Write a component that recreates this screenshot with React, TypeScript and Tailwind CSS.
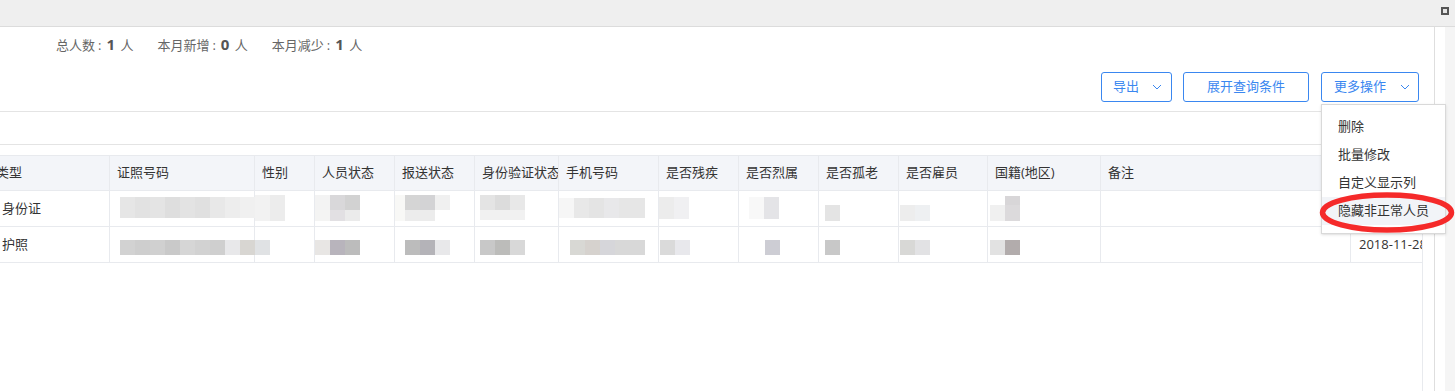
import React from 'react'

type Block = [number, number, number, number, string]

// column widths in px, matched to the grid lines of the reference
const cols = 'grid-cols-[110px_145px_60px_80px_80px_84px_100px_80px_80px_80px_89px_113px_250px_72px]'

// last column header sits under the open menu, so it stays empty
const heads = ['类型', '证照号码', '性别', '人员状态', '报送状态', '身份验证状态', '手机号码', '是否残疾', '是否烈属', '是否孤老', '是否雇员', '国籍(地区)', '备注', '']

// pixelated (blurred) cells, per row: column index -> blocks [x, y, w, h, color]
const blur1: Record<number, Block[]> = {
  1: [[10, 6, 15, 21, '#e6e6e6'], [25, 6, 15, 21, '#e2e2e2'], [40, 6, 15, 21, '#e4e4e4'], [55, 6, 15, 21, '#dedede'], [70, 6, 15, 21, '#e3e3e3'], [85, 6, 15, 21, '#e0e0e0'], [100, 6, 15, 21, '#e8e8e8'], [115, 6, 15, 21, '#ededed'], [130, 6, 15, 21, '#f0f0f0']],
  2: [[0, 4, 15, 26, '#f2f2f2'], [15, 4, 15, 26, '#ececec']],
  3: [[0, 4, 15, 15, '#f3f3f3'], [15, 4, 15, 15, '#d9d8da'], [30, 4, 15, 15, '#d2d2d2'], [0, 19, 15, 11, '#f4f4f3'], [15, 19, 15, 11, '#e2e0e3'], [30, 19, 15, 11, '#ebebeb']],
  4: [[0, 4, 10, 26, '#f8f8f6'], [10, 4, 15, 15, '#d5d5d5'], [25, 4, 15, 15, '#d3d3d5'], [40, 4, 15, 15, '#f0f0f0'], [10, 19, 30, 11, '#ececec']],
  5: [[5, 4, 15, 15, '#e4e4e4'], [20, 4, 15, 15, '#dcdcdc'], [35, 4, 15, 15, '#e8e8e8'], [5, 19, 45, 10, '#f1f1f1']],
  6: [[0, 7, 15, 20, '#f6f6f6'], [15, 7, 15, 20, '#e8e8e8'], [30, 7, 15, 20, '#e4e4e4'], [45, 7, 15, 20, '#e8e8ea'], [60, 7, 26, 20, '#e6e6e6']],
  7: [[0, 6, 15, 22, '#ececec'], [15, 6, 15, 22, '#f0f0f2']],
  8: [[10, 6, 15, 22, '#f8f8f8'], [25, 6, 15, 22, '#e4e4e7']],
  9: [[6, 14, 15, 16, '#e4e4e4']],
  10: [[1, 14, 15, 16, '#ededed'], [16, 14, 15, 16, '#eef0f2']],
  11: [[2, 14, 15, 16, '#f0f0f0'], [17, 5, 15, 9, '#d8d6d8'], [17, 14, 15, 16, '#dcdadc']],
}

const blur2: Record<number, Block[]> = {
  1: [[10, 13, 15, 15, '#d2d2d2'], [25, 13, 15, 15, '#cecece'], [40, 13, 15, 15, '#d0d0d0'], [55, 13, 15, 15, '#c9c9c9'], [70, 13, 15, 15, '#d6d6d6'], [85, 13, 15, 15, '#d2d2d2'], [100, 13, 15, 15, '#cfcfcf'], [115, 13, 15, 15, '#e8e8ea'], [130, 13, 15, 15, '#d8d6d2']],
  2: [[0, 13, 15, 15, '#e0e2e4']],
  3: [[0, 13, 15, 15, '#e8e6e4'], [15, 13, 15, 15, '#b8b4bc'], [30, 13, 15, 15, '#bcbcbc']],
  4: [[10, 13, 15, 15, '#bcbcbc'], [25, 13, 15, 15, '#b4b3b8'], [40, 13, 15, 15, '#e8e8ea']],
  5: [[5, 13, 15, 15, '#c8c8c8'], [20, 13, 15, 15, '#bcbcba'], [35, 13, 15, 15, '#d8d8d8']],
  6: [[11, 13, 15, 15, '#d8d8d4'], [26, 13, 15, 15, '#d6d2ce'], [41, 13, 15, 15, '#d6d6da'], [56, 13, 30, 15, '#d8d8d8']],
  7: [[1, 13, 15, 15, '#dadada'], [16, 13, 15, 15, '#e8e8ec']],
  8: [[26, 13, 15, 15, '#cdcdd4']],
  9: [[6, 13, 15, 15, '#c8c8c8']],
  10: [[1, 13, 15, 15, '#d8d8d6'], [16, 13, 15, 15, '#e2e2e4']],
  11: [[2, 13, 15, 15, '#e2e2e2'], [17, 13, 15, 15, '#b2acac']],
}

function Chevron() {
  return (
    <svg width="10" height="6" viewBox="0 0 10 6" className="text-[#3a87f0]">
      <polyline points="1,1 5,5 9,1" fill="none" stroke="currentColor" strokeWidth="1" />
    </svg>
  )
}

function BlurCell({ blocks }: { blocks: Block[] }) {
  return (
    <svg width="100%" height="36" className="overflow-visible block">
      {blocks.map(([x, y, w, h, c], i) => (
        <rect key={i} x={x} y={y} width={w} height={h} fill={c} />
      ))}
    </svg>
  )
}

function Row({ type, date, blur }: { type: string; date: string; blur: Record<number, Block[]> }) {
  return (
    <div className={`grid ${cols} h-[36px] border-b border-[#e8eaee]`}>
      {heads.map((_, i) => {
        const base = 'border-r border-[#e8eaee] flex items-center text-[13px] text-[#333] overflow-visible'
        if (i === 0) return <div key={i} className={`${base} pl-[2px]`}>{type}</div>
        if (i === 13) return <div key={i} className={`${base} pl-[8px] overflow-hidden whitespace-nowrap`}>{date}</div>
        if (blur[i]) return <div key={i} className={base}><BlurCell blocks={blur[i]} /></div>
        return <div key={i} className={base} />
      })}
    </div>
  )
}

export default function App() {
  return (
    <div className="relative w-[1455px] h-[391px] bg-white overflow-hidden font-['Open_Sans','Noto_Sans_CJK_SC',sans-serif]">
      {/* window bar */}
      <div className="h-[27px] bg-[#efefef] border-b border-[#dcdcdc] flex justify-end pr-[6px] pt-[7px]">
        <div className="w-[8px] h-[8px] border-2 border-[#555] bg-[#e4e4e4]" />
      </div>

      <div className="flex h-[364px]">
        <div className="w-[1435px] border-r border-[#dedede] flex flex-col">
          {/* stats */}
          <div className="h-[34px] flex items-center pl-[56px] text-[13px] text-[#666] gap-[24px]">
            <span>总人数<span className="mx-[3px]">:</span><b className="text-[15px] text-[#555] mx-[2px]">1</b> 人</span>
            <span>本月新增<span className="mx-[3px]">:</span><b className="text-[15px] text-[#555] mx-[2px]">0</b> 人</span>
            <span>本月减少<span className="mx-[3px]">:</span><b className="text-[15px] text-[#555] mx-[2px]">1</b> 人</span>
          </div>

          {/* toolbar */}
          <div className="mt-[11px] h-[30px] flex justify-end pr-[15px] gap-[11px] text-[13px] text-[#3a87f0]">
            <button className="w-[71px] h-[30px] border border-[#3a87f0] rounded-[3px] flex items-center justify-between pl-[11px] pr-[9px]">
              <span>导出</span><Chevron />
            </button>
            <button className="w-[126px] h-[30px] border border-[#3a87f0] rounded-[3px] flex items-center justify-center">
              展开查询条件
            </button>
            <button className="ml-[1px] w-[98px] h-[30px] border border-[#3a87f0] rounded-[3px] flex items-center justify-between pl-[12px] pr-[8px]">
              <span>更多操作</span><Chevron />
            </button>
          </div>

          <div className="mt-[9px] h-[34px] border-y border-[#e4e4e4]" />

          {/* table */}
          <div className="mt-[10px] w-[1423px] flex-1 border-r border-[#e8eaee] overflow-hidden">
            <div className={`grid ${cols} h-[36px] bg-[#f3f5f9] border-y border-[#e8eaee]`}>
              {heads.map((h, i) => (
                <div key={i} className={`border-r border-[#e8eaee] flex items-center text-[13px] text-[#333] whitespace-nowrap overflow-hidden ${i === 0 ? 'pl-0' : 'pl-[7px]'}`}>
                  <span className={i === 0 ? '-ml-[4px]' : ''}>{h}</span>
                </div>
              ))}
            </div>
            <Row type="身份证" date="" blur={blur1} />
            <Row type="护照" date="2018-11-28" blur={blur2} />
          </div>
        </div>
        <div className="w-[10px]" />
        <div className="w-[10px] bg-[#f5f5f5]" />
      </div>

      {/* dropdown menu */}
      <div className="absolute left-[1321px] top-[104px] w-[125px] h-[130px] bg-white border border-[#d9d9d9] shadow-sm pt-[8px] text-[13px] text-[#333]">
        <div className="h-[28px] flex items-center pl-[16px]">删除</div>
        <div className="h-[28px] flex items-center pl-[16px]">批量修改</div>
        <div className="h-[28px] flex items-center pl-[16px]">自定义显示列</div>
        <div className="h-[28px] flex items-center pl-[16px] bg-[#f2f4f8]">隐藏非正常人员</div>
      </div>

      {/* red annotation */}
      <svg className="absolute left-[1315px] top-[188px] pointer-events-none" width="145" height="50" viewBox="0 0 145 50">
        <ellipse cx="72" cy="24.5" rx="64.5" ry="17.5" fill="none" stroke="#f52a2a" strokeWidth="5.5" />
      </svg>
    </div>
  )
}
